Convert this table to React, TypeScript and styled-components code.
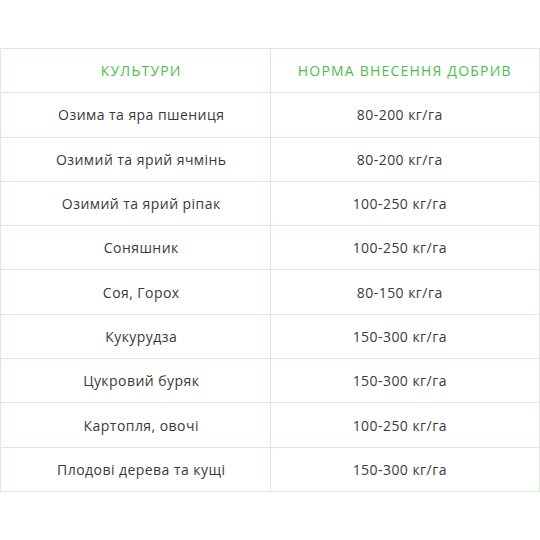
import React from "react";
import styled, { createGlobalStyle } from "styled-components";

const Global = createGlobalStyle`
  html, body { margin: 0; padding: 0; background: #ffffff; }
  body { font-family: "Open Sans", "Noto Sans", sans-serif; }
`;

const Page = styled.div`
  width: 540px;
  height: 540px;
  padding-top: 48px;
  box-sizing: border-box;
`;

const Table = styled.table`
  width: 540px;
  border-collapse: collapse;
  table-layout: fixed;
`;

const HeadCell = styled.th<{ $col: number }>`
  height: 44.3px;
  box-sizing: border-box;
  border: 1px solid #d6ecd3;
  color: #4fbb4f;
  font-weight: 400;
  font-size: 14px;
  letter-spacing: 1.2px;
  text-transform: uppercase;
  text-align: center;
  padding: ${(p) => (p.$col === 0 ? "0 0 0 12px" : "0")};
`;

const Cell = styled.td<{ $col: number }>`
  height: 44.3px;
  box-sizing: border-box;
  border: 1px solid #d6ecd3;
  color: #3a3a3a;
  font-size: 14px;
  letter-spacing: 0.45px;
  text-align: center;
  padding: ${(p) => (p.$col === 0 ? "0 0 0 12px" : "0 10px 0 0")};
`;

const rows: [string, string][] = [
  ["Озима та яра пшениця", "80-200 кг/га"],
  ["Озимий та ярий ячмінь", "80-200 кг/га"],
  ["Озимий та ярий ріпак", "100-250 кг/га"],
  ["Соняшник", "100-250 кг/га"],
  ["Соя, Горох", "80-150 кг/га"],
  ["Кукурудза", "150-300 кг/га"],
  ["Цукровий буряк", "150-300 кг/га"],
  ["Картопля, овочі", "100-250 кг/га"],
  ["Плодові дерева та кущі", "150-300 кг/га"],
];

export default function App() {
  return (
    <>
      <Global />
      <Page>
        <Table>
          <thead>
            <tr>
              <HeadCell $col={0}>Культури</HeadCell>
              <HeadCell $col={1}>Норма внесення добрив</HeadCell>
            </tr>
          </thead>
          <tbody>
            {rows.map(([a, b]) => (
              <tr key={a}>
                <Cell $col={0}>{a}</Cell>
                <Cell $col={1}>{b}</Cell>
              </tr>
            ))}
          </tbody>
        </Table>
      </Page>
    </>
  );
}
